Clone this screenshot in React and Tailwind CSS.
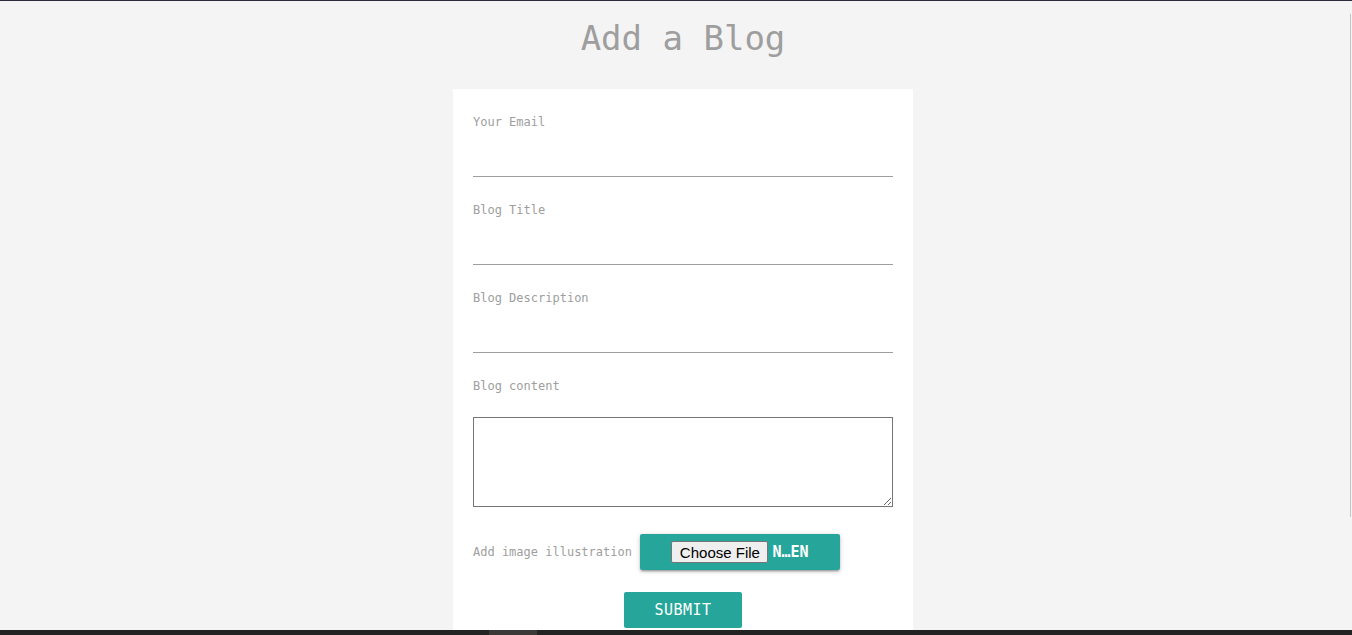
import React from 'react';

const MONO = "font-['DejaVu_Sans_Mono','Liberation_Mono',monospace]";

function Field({ label }) {
  return (
    <div className="mb-6">
      <label className="relative top-px block h-4 text-[12px] leading-4 text-[#9e9e9e]">{label}</label>
      <input
        type="text"
        className="block h-12 w-full border-0 border-b border-[#9e9e9e] bg-transparent outline-none"
      />
    </div>
  );
}

export default function App() {
  return (
    <div className={`relative flex h-[635px] flex-col overflow-hidden bg-[#f4f4f4] ${MONO}`}>
      {/* top window edge */}
      <div className="h-px bg-[#2b2b3a]" />

      <main className="flex-1 overflow-hidden pl-[14px]">
        <h1 className="pt-[17px] text-center text-[34px] leading-10 text-[#9e9e9e]">Add a Blog</h1>

        <form className="mx-auto mt-[31px] w-[460px] bg-white px-5 pt-6 pb-6">
          <Field label="Your Email" />
          <Field label="Blog Title" />
          <Field label="Blog Description" />

          <div>
            <label className="relative top-px block h-4 text-[12px] leading-4 text-[#9e9e9e]">Blog content</label>
            <textarea className="mt-6 block h-[90px] w-full resize-y border border-[#767676] bg-white outline-none" />
          </div>

          {/* image upload */}
          <div className="mt-[27px] flex items-center gap-2">
            <span className="text-[12px] leading-4 text-[#9e9e9e]">Add image illustration</span>
            <div className="flex h-9 w-[200px] items-center justify-center rounded-[2px] bg-[#26a69a] shadow-[0_2px_2px_0_rgba(0,0,0,0.14),0_3px_1px_-2px_rgba(0,0,0,0.12),0_1px_5px_0_rgba(0,0,0,0.2)]">
              <button
                type="button"
                className="flex h-[22px] w-[97px] items-center justify-center rounded-[2px] border border-[#767676] bg-[#efefef] font-['Liberation_Sans',Arial,sans-serif] text-[15px] leading-none text-black"
              >
                Choose File
              </button>
              <span className="ml-1 text-[15px] font-bold leading-none text-white">N…EN</span>
            </div>
          </div>

          <div className="mt-[22px] flex justify-center">
            <button
              type="submit"
              className="h-9 w-[118px] rounded-[2px] bg-[#26a69a] text-[15px] font-medium uppercase tracking-[0.5px] text-white"
            >
              Submit
            </button>
          </div>
        </form>
      </main>

      {/* taskbar strip */}
      <div className="flex h-[5px] bg-[#232323]">
        <div className="ml-[489px] w-[48px] bg-[#3c3a39]" />
      </div>

      {/* scrollbar edge */}
      <div className="absolute left-[1350px] top-[14px] h-[503px] w-px bg-[#c4c4c4]" />
    </div>
  );
}
